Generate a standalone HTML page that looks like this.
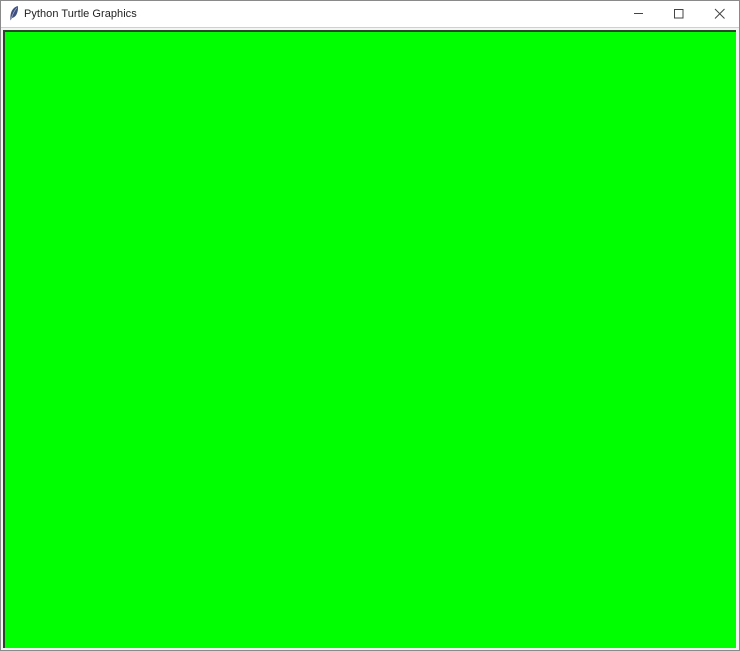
<!DOCTYPE html>
<html>
<head>
<meta charset="utf-8">
<style>
html,body{margin:0;padding:0;width:740px;height:651px;overflow:hidden;background:#fff;position:relative;font-family:"Liberation Sans","Noto Sans CJK TC",sans-serif}
div,svg{position:absolute}
.title{left:24px;top:7px;font-size:11px;line-height:15px;color:#222;white-space:nowrap;letter-spacing:.04px}
</style>
</head>
<body>
<div style="left:0;top:0;width:740px;height:1px;background:#8a8a8a"></div>
<div style="left:0;top:0;width:1px;height:651px;background:#8a8a8a"></div>
<div style="left:739px;top:0;width:1px;height:651px;background:#8a8a8a"></div>
<div style="left:0;top:650px;width:740px;height:1px;background:#8a8a8a"></div>
<div style="left:1px;top:27px;width:738px;height:1px;background:#d0d0d0"></div>
<div style="left:1px;top:28px;width:738px;height:622px;background:#f4f4f4"></div>
<svg style="left:9px;top:5px" width="11" height="16" viewBox="0 0 11 16">
<path d="M1.500 15.500 C1.200 13 1.300 10.500 2 8 C3 4.500 5.500 1.800 8.800 1 C9.300 4 8.800 7 7.500 9.500 C6.500 11.200 5 12.500 3 13 C2.500 13.800 2 14.700 1.500 15.500 Z" fill="#3e4f80"/>
<path d="M2.300 13.500 C3.500 9.500 5.500 5.500 7.800 2.800" stroke="#a9b4d0" stroke-width=".7" fill="none"/>
</svg>
<div class="title">Python Turtle Graphics</div>
<svg style="left:620px;top:0" width="120" height="27" viewBox="0 0 120 27">
<path d="M14 13.500H23" stroke="#444" stroke-width="1" fill="none"/>
<rect x="54.500" y="9.500" width="8.500" height="8.500" stroke="#444" stroke-width="1" fill="none"/>
<path d="M95 9L104.500 18.500M104.500 9L95 18.500" stroke="#444" stroke-width="1" fill="none"/>
</svg>
<div style="left:3px;top:30px;width:733px;height:2px;background:#2b452b"></div>
<div style="left:3px;top:30px;width:2px;height:618px;background:#2b452b"></div>
<div style="left:5px;top:32px;width:731px;height:616px;background:#00ff00"></div>
</body>
</html>
